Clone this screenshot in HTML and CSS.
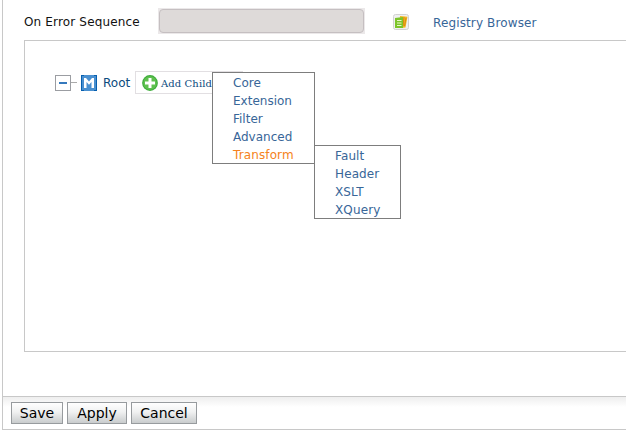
FILE: index.html
```html
<!DOCTYPE html>
<html lang="en">
<head>
<meta charset="utf-8">
<title>Sequence Editor</title>
<link rel="stylesheet" href="styles.css">
</head>
<body>
<main class="editor">
  <div class="content">
    <div class="error-row">
      <label class="error-label" for="seq">On Error Sequence</label>
      <div class="field"><input id="seq" type="text" readonly></div>
      <svg class="registry-icon" width="16" height="16" viewBox="0 0 16 16">
        <rect x=".5" y=".5" width="15" height="15" rx="2" fill="#f0f0f0" stroke="#d2d2d2"/>
        <path d="M7 2l7.500.8-2 10.700-5 .5z" fill="#f3b51d"/>
        <path d="M11 3l-1 9M13 4l-1.500 8" stroke="#d88b12" fill="none"/>
        <path d="M2 4l8-1v11H2z" fill="#7cc42a"/>
        <path d="M4 6.500h4.500M4 9h4.500M4 11.500h4.500" stroke="#e8f8c8" stroke-width="1.200"/>
      </svg>
      <a class="registry-link">Registry Browser</a>
    </div>
    <section class="tree-panel">
      <div class="tree-row">
        <span class="toggle"><i></i></span><span class="branch"></span>
        <svg class="mediator" width="16" height="16" viewBox="0 0 16 16">
          <rect width="16" height="16" fill="#4a90d0"/>
          <path d="M0 0h3v1H1v14h2v1H0zM16 0h-3v1h2v14h-2v1h3z" fill="#075fae"/>
          <path d="M3 13V3h2l3 3.500L11 3h2v10h-2.500V7L8 9.800 5.500 7v6z" fill="#fff"/>
        </svg>
        <span class="root">Root</span>
        <div class="add-child">
          <svg width="16" height="16" viewBox="0 0 16 16">
            <circle cx="8" cy="8" r="7.900" fill="#3fae3c"/>
            <circle cx="8" cy="8" r="6.700" fill="#5fc04f"/>
            <path d="M6.500 3h3v3.500H13v3H9.500V13h-3V9.500H3v-3h3.500z" fill="#fff"/>
          </svg>
          <span>Add Child</span>
          <ul class="menu">
            <li>Core</li><li>Extension</li><li>Filter</li><li>Advanced</li>
            <li class="active">Transform
              <ul class="menu submenu"><li>Fault</li><li>Header</li><li>XSLT</li><li>XQuery</li></ul>
            </li>
          </ul>
        </div>
      </div>
    </section>
  </div>
  <footer class="actions">
    <button class="save">Save</button><button class="apply">Apply</button><button class="cancel">Cancel</button>
  </footer>
</main>
</body>
</html>
```
FILE: styles.css
```css
* { box-sizing: border-box; }
body { margin: 0; background: #fff; font: 12px/18px "DejaVu Sans", sans-serif; overflow: hidden; }
.editor { height: 430px; margin-left: 2px; border-left: 1px solid #c8c8c8; border-bottom: 1px solid #c8c8c8; display: flex; flex-direction: column; }
.content { height: 396px; padding-left: 21px; }
.error-row { height: 40px; padding-top: 8px; display: flex; align-items: flex-start; }
.error-label { width: 134px; padding-top: 5px; color: #111; white-space: nowrap; letter-spacing: .16px; }
.field { width: 207px; height: 26px; padding: 1px; background: #ebe8e9; }
.field input { display: block; width: 205px; height: 24px; border: 1px solid #c5bfc1; border-radius: 4px; background: #dedad9; }
.registry-icon { margin: 6px 24px 0 28px; }
.registry-link { padding-top: 6px; color: #386698; white-space: nowrap; letter-spacing: .13px; }
.tree-panel { height: 312px; border: 1px solid #c8c8c8; border-right: 0; padding: 30px 0 0 30px; }
.tree-row { height: 23px; display: flex; align-items: center; }
.toggle { width: 16px; height: 16px; border: 1px solid #9b9da2; display: flex; align-items: center; justify-content: center; }
.toggle i { width: 8px; height: 2px; background: #3579bd; }
.branch { width: 6px; height: 1px; background: #aaa; }
.mediator { margin-left: 4px; }
.root { width: 38px; padding-left: 6px; color: #0b4a7d; }
.add-child { position: relative; width: 108px; height: 23px; border: 1px solid #e2dfe2; padding-left: 6px; display: flex; align-items: center; color: #0b4a7d; font: 10px/18px "DejaVu Serif", serif; }
.add-child > span { margin-left: 3px; padding-top: 3px; white-space: nowrap; letter-spacing: .1px; }
.menu { position: absolute; left: 76px; top: 0; width: 103px; height: 92px; margin: 0; padding: 1px 0 0 20px; list-style: none; border: 1px solid #7d7d7d; background: #fff; color: #386698; font: 12px/18px "DejaVu Sans", sans-serif; }
.menu li { height: 18px; }
.active { color: #f58220; letter-spacing: .12px; }
.submenu { left: 101px; top: 72px; width: 87px; height: 74px; }
.actions { height: 33px; border-top: 1px solid #c8c8c8; padding: 5px 0 0 8px; display: flex; gap: 4px; background: linear-gradient(#eee, #fff 10px); }
.actions button { height: 22px; padding: 0; border: 1px solid #979b9e; color: #000; background: linear-gradient(#fff, #f0f1f1 45%, #c9cccd); font: 14px/18px "DejaVu Sans", sans-serif; }
.save { width: 52px; }
.apply { width: 60px; }
.cancel { width: 66px; }
```
